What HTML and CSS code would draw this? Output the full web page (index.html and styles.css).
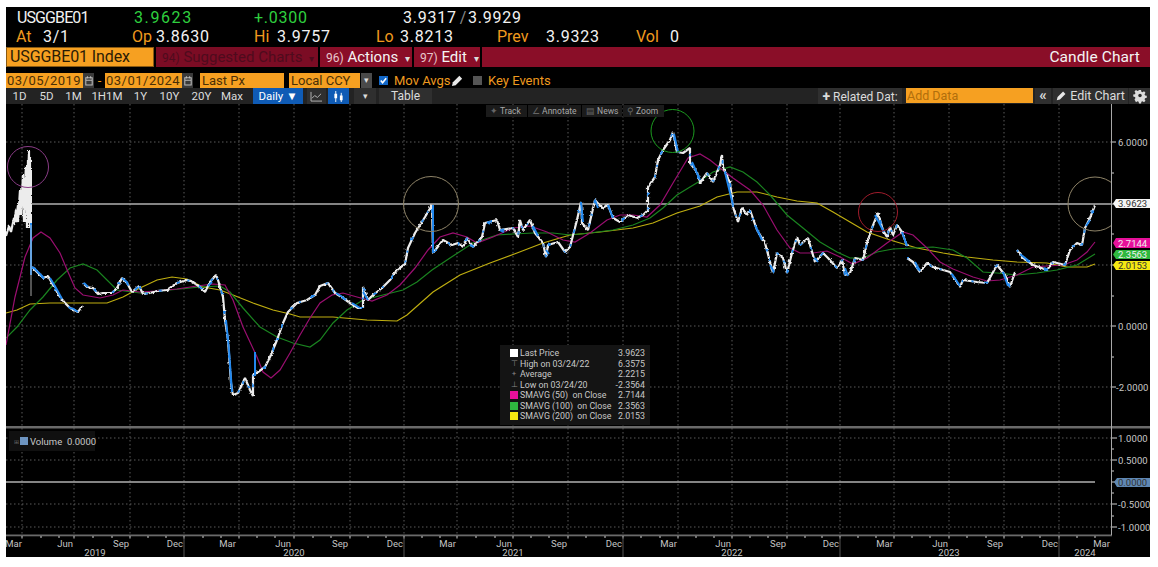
FILE: index.html
```html
<!DOCTYPE html>
<html lang="en">
<head>
<meta charset="utf-8">
<title>USGGBE01 Candle Chart</title>
<link rel="stylesheet" href="styles.css">
</head>
<body>
<main class="terminal">
  <section class="quote">
    <div class="quote-top">
      <span class="white">USGGBE01</span>
      <span class="green widest">3.9623</span>
      <span class="green wide">+.0300</span>
      <span class="white wide">3.9317<i class="slash">/</i>3.9929</span>
    </div>
    <div class="quote-bottom">
      <span class="orange">At</span><span class="white wide">3/1</span>
      <span class="orange">Op</span><span class="white wide">3.8630</span>
      <span class="orange">Hi</span><span class="white wide">3.9757</span>
      <span class="orange">Lo</span><span class="white wide">3.8213</span>
      <span class="orange">Prev</span><span class="white wide">3.9323</span>
      <span class="orange">Vol</span><span class="white">0</span>
    </div>
  </section>

  <nav class="cmdbar">
    <span class="cmd-ticker">USGGBE01 Index</span>
    <span class="cmd cmd-suggest"><small>94)</small> Suggested Charts <b class="caret">▾</b></span>
    <span class="cmd cmd-actions"><small>96)</small> Actions <b class="caret">▾</b></span>
    <span class="cmd cmd-edit"><small>97)</small> Edit <b class="caret">▾</b></span>
    <span class="cmd-title">Candle Chart</span>
  </nav>

  <div class="params">
    <span class="field field-date">03/05/2019</span>
    <span class="cal"><svg viewBox="0 0 10 12" class="cal-icon"><path d="M1 2h8v9H1zM1 5h8M3 0v3M7 0v3" fill="none" stroke="#bbb" stroke-width="1.3"/></svg></span>
    <span class="dash">-</span>
    <span class="field field-date">03/01/2024</span>
    <span class="cal"><svg viewBox="0 0 10 12" class="cal-icon"><path d="M1 2h8v9H1zM1 5h8M3 0v3M7 0v3" fill="none" stroke="#bbb" stroke-width="1.3"/></svg></span>
    <span class="field field-px">Last Px</span>
    <span class="field field-ccy">Local CCY</span>
    <span class="drop">▾</span>
    <span class="check"><svg viewBox="0 0 10 10" class="check-icon"><path d="M2 5l2 2.500 4-5" fill="none" stroke="#fff" stroke-width="1.800"/></svg></span>
    <span class="opt opt-mov">Mov Avgs</span>
    <svg viewBox="0 0 14 14" class="pencil"><path d="M1 13l1-4 7-7 3 3-7 7z" fill="#e8e8e8"/></svg>
    <span class="box"></span>
    <span class="opt">Key Events</span>
  </div>

  <div class="toolbar">
    <span class="tb tb-w27">1D</span>
    <span class="tb tb-w27">5D</span>
    <span class="tb tb-w27">1M</span>
    <span class="tb tb-w40">1H1M</span>
    <span class="tb tb-w27">1Y</span>
    <span class="tb tb-w31">10Y</span>
    <span class="tb tb-w33">20Y</span>
    <span class="tb tb-w28">Max</span>
    <span class="tb tb-daily">Daily ▼</span>
    <span class="tb tb-line"><svg viewBox="0 0 14 12" class="tb-icon"><path d="M1 1v10h12M2 8l3-3 3 2 4-4" fill="none" stroke="#bbb" stroke-width="1"/></svg></span>
    <span class="tb tb-candle"><svg viewBox="0 0 14 12" class="tb-icon"><path d="M4 0v12M10 2v10" stroke="#fff" stroke-width="1"/><path d="M2.500 3h3v5h-3zM8.500 5h3v5h-3z" fill="#fff"/></svg></span>
    <span class="tb tb-more">▾</span>
    <span class="tb tb-table">Table</span>
    <span class="tb-spacer"></span>
    <span class="tb tb-related"><b class="plus">+</b> Related Dat:</span>
    <span class="add-data">Add Data</span>
    <span class="tb tb-back">«</span>
    <span class="tb tb-editc"><svg viewBox="0 0 14 14" class="tb-pencil"><path d="M1 13l1-4 7-7 3 3-7 7z" fill="#e8e8e8"/></svg>Edit Chart</span>
    <span class="tb tb-gear"><svg viewBox="0 0 14 14" class="tb-gear-icon"><path d="M5.800 0h2.400l.4 2 1.300.6 1.800-1.100 1.700 1.700-1.100 1.800.6 1.300 2 .4v2.400l-2 .4-.6 1.300 1.100 1.800-1.700 1.700-1.800-1.100-1.300.6-.4 2H5.800l-.4-2-1.300-.6-1.800 1.100L.6 11.200l1.100-1.800L1.100 8.100-.9 7.700V5.300l2-.4.6-1.300L.6 1.800 2.300.1l1.800 1.100 1.300-.6z" fill="#ddd" fill-rule="evenodd"/><circle cx="7" cy="6.500" r="2" fill="#2a2a2a"/></svg></span>
  </div>

  <section class="chart">
    <svg class="plot" viewBox="6 104 1144 453" width="1144" height="453">
      <defs>
        <clipPath id="paneclip"><rect x="6" y="104" width="1105.500" height="322"/></clipPath>
        <filter id="jitter" x="-2%" y="-10%" width="104%" height="120%">
          <feTurbulence type="fractalNoise" baseFrequency="0.4" numOctaves="1" seed="4"/>
          <feDisplacementMap in="SourceGraphic" scale="3" xChannelSelector="R" yChannelSelector="G"/>
        </filter>
        <g id="spike">
          <polyline points="6,236 9,226 11,232 14,218 16,222 18,205 19,215 21,195 22,205 24,178 25,195 26,170 27,215 28,160 29,205 30,157 30,228 31,170 31,225"/>
          <polyline points="14,225 16,210 18,222 20,190 21,215 23,175 24,222 26,165 27,228 29,150 29,222"/>
        </g>
        <g id="series">
          <polyline points="32,267 37,272 43,278 48,276 53,285 60,297 65,303 70,308 78,312 82,306"/>
          <polyline points="83,283 87,287 93,288 98,294 103,293 112,293 117,288 122,278 127,283 132,292 139,286 143,294 150,293 157,291 167,290 177,283 187,280 193,282 200,287 205,292 210,282 216,275 218,280 223,297 225,320 228,340 231,383 233,395 238,393 245,378 250,390 253,396 253,375 258,372 265,367 270,357 277,340 283,323 288,312 297,303 307,300 315,295 320,286 328,283 335,293 343,298 350,303 358,308 363,308 363,287 368,300 373,295 382,288 390,280 397,270 405,264 408,248 415,233 425,217 432,205 433,253 443,240 452,245 458,243 463,247 467,238 473,247 482,237 485,223 497,220 500,230 513,228 518,237 520,220 523,230 530,220 535,233 543,243 546,257 548,245 558,242 565,252 570,247 577,220 581,202 582,223 588,230 595,200 602,208 608,205 613,218 620,222 628,215 637,218 643,215 648,210 648,187 655,177 658,160 663,150 670,140 673,132 677,152 683,153 690,148 690,163 697,172 700,183 707,173 713,182 720,165 722,155 723,167 730,183 733,207 738,222 742,208 747,215 750,210 757,230 765,243 773,273 777,253 783,258 787,273 792,253 797,237 800,245 808,238 815,262 823,253 828,258 837,268 842,260 845,275 850,273 855,258 863,260 867,243 872,228 878,213 883,230 887,237 890,227 893,235 897,225 902,232 907,246"/>
          <polyline points="907,258 913,262 920,272 927,263 933,267 950,272 960,287 963,280 977,282 987,283 997,265 1005,275 1010,287 1015,272"/>
          <polyline points="1017,250 1022,257 1033,265 1047,270 1053,262 1065,265 1070,250 1077,243 1082,245 1085,228 1090,218 1095,205"/>
        </g>
      </defs>

      <path class="grid" d="M22 104V535M74 104V535M130 104V535M184 104V535M239 104V535M294 104V535M350 104V535M404 104V535M457 104V535M513 104V535M568 104V535M623 104V535M678 104V535M732 104V535M787 104V535M840 104V535M894 104V535M949 104V535M1004 104V535M1059 104V535"/>
      <path class="grid" d="M6 142H1111M6 265H1111M6 326H1111M6 387H1111M6 438H1111M6 460H1111M6 504H1111M6 527H1111"/>

      <line class="level" x1="31" y1="204" x2="1111" y2="204"/>
      <line class="level" x1="6" y1="482" x2="1095" y2="482"/>

      <polyline class="ma ma200" points="6,313 17,310 30,304 50,303 83,303 107,303 123,297 140,288 157,280 172,277 187,279 203,287 220,290 233,295 253,303 273,310 290,314 300,317 333,317 367,320 397,321 407,315 433,292 460,275 490,263 517,253 543,243 570,235 600,232 633,228 653,223 677,213 700,206 717,197 737,192 757,192 777,197 797,201 817,203 833,212 850,222 867,232 890,240 917,248 943,253 967,257 993,260 1017,262 1047,263 1067,267 1087,267 1095,264"/>
      <polyline class="ma ma100" points="6,338 17,327 30,310 43,297 57,280 70,268 83,264 97,270 107,280 117,290 140,293 160,291 180,289 200,287 220,286 230,292 243,308 260,327 277,337 293,343 310,347 320,340 333,323 347,310 363,300 383,295 403,290 417,282 432,270 450,258 473,243 497,235 513,234 533,233 553,233 570,235 590,233 613,230 633,225 650,218 663,208 677,195 690,187 700,181 713,172 730,167 743,172 757,182 770,195 787,215 803,228 820,242 837,252 850,258 863,258 877,252 893,249 913,248 933,247 953,250 967,258 983,272 997,273 1017,275 1037,273 1057,270 1077,265 1095,254"/>
      <polyline class="ma ma50" points="6,345 15,297 25,257 33,238 41,232 50,238 60,253 68,272 75,288 83,295 100,298 113,295 123,290 140,292 157,291 177,289 197,286 213,284 225,285 233,300 243,327 257,357 263,372 271,378 280,370 290,353 300,335 310,318 320,303 332,295 343,293 357,297 372,301 387,295 400,285 415,268 428,250 440,237 453,233 467,237 477,243 493,237 513,228 530,226 547,232 563,240 575,242 590,233 607,220 620,215 633,215 647,217 660,205 673,183 688,158 700,154 710,160 720,168 733,178 750,190 763,205 777,230 790,248 800,253 813,253 827,251 840,257 853,264 867,258 887,243 903,232 913,235 927,248 940,262 953,269 973,277 987,281 1000,280 1017,275 1033,267 1047,266 1063,265 1077,260 1087,252 1095,242"/>

      <use class="candles" href="#spike" filter="url(#jitter)"/>
      <use class="candles" href="#series" filter="url(#jitter)"/>
      <use class="candles-blue" href="#series" filter="url(#jitter)"/>
      <g class="falls">
        <path d="M31 223V275M433 205V253M226 320L229 350L232 392M255 352V376"/>
        <path d="M33 267L38 272L44 278M50 278L56 288L62 299M72 308L78 312M84 283L88 287M122 278L128 283M135 290L138 287M208 286L212 282"/>
        <path d="M336 293L344 298M352 303L360 308M363 292L368 300M470 245L474 247M487 222L490 224M500 230L504 232M533 226L538 236M546 250L549 254M581 202L583 222M595 200L598 208M608 205L613 218M674 134L678 152M692 162L700 180M725 172L733 205M755 225L762 240M770 265L774 272M815 258L818 262M845 268L848 276M875 215L884 232M902 232L907 246"/>
        <path d="M915 262L920 271M952 274L960 286M1003 272L1008 286M1020 254L1030 262M1044 268L1048 270M1086 226L1090 220"/>
      </g>
      <line class="wick" x1="31" y1="225" x2="31" y2="296"/>

      <g clip-path="url(#paneclip)">
        <circle class="ring ring-pink" cx="28" cy="167" r="20.500"/>
        <circle class="ring ring-tan" cx="431" cy="204" r="27.500"/>
        <circle class="ring ring-green" cx="672.500" cy="131" r="21.500"/>
        <circle class="ring ring-red" cx="878" cy="212" r="19.500"/>
        <circle class="ring ring-tan" cx="1095" cy="204" r="27"/>
      </g>

      <rect class="divider" x="6" y="426" width="1144" height="2.500"/>
      <rect class="divider" x="6" y="534.500" width="1106" height="1.800"/>
      <line class="axis" x1="1111.500" y1="104" x2="1111.500" y2="535"/>
      <path class="ticks" d="M1112 142h4M1112 173h2M1112 204h4M1112 234h2M1112 265h4M1112 296h2M1112 326h4M1112 357h2M1112 387h4M1112 438h5M1112 449h2M1112 460h5M1112 471h2M1112 482h4M1112 493h2M1112 504h5M1112 516h2M1112 527h5"/>
      <path class="ticks" d="M22 536v2.500M41 536v2M59 536v2M74 536v2.500M93 536v2M112 536v2M130 536v2.500M148 536v2M166 536v2M184 536v2.500M203 536v2M221 536v2M239 536v2.500M257 536v2M275 536v2M294 536v2.500M313 536v2M331 536v2M350 536v2.500M368 536v2M386 536v2M404 536v2.500M422 536v2M440 536v2M457 536v2.500M476 536v2M495 536v2M513 536v2.500M531 536v2M549 536v2M568 536v2.500M586 536v2M605 536v2M623 536v2.500M641 536v2M660 536v2M678 536v2.500M696 536v2M714 536v2M732 536v2.500M750 536v2M768 536v2M787 536v2.500M805 536v2M822 536v2M840 536v2.500M858 536v2M876 536v2M894 536v2.500M912 536v2M930 536v2M949 536v2.500M967 536v2M986 536v2M1004 536v2.500M1022 536v2M1040 536v2M1059 536v2.500M1077 536v2M1095 536v2"/>
      <path class="yearline" d="M184 537V557M404 537V557M623 537V557M840 537V557M1059 537V557"/>

      <g class="axis-label">
        <text x="1118" y="145.500">6.0000</text>
        <text x="1118" y="329.500">0.0000</text>
        <text x="1116" y="390.500">-2.0000</text>
        <text x="1118" y="441.500">1.0000</text>
        <text x="1118" y="463.500">0.5000</text>
        <text x="1118" y="507.500">-0.5000</text>
        <text x="1118" y="530.500">-1.0000</text>
      </g>

      <polygon class="tag-white" points="1113,203.500 1116,199 1150,199 1150,208 1116,208"/>
      <polygon class="tag-magenta" points="1113,243 1116,238 1150,238 1150,248 1116,248"/>
      <polygon class="tag-lime" points="1113,254.500 1116,250 1150,250 1150,259 1116,259"/>
      <polygon class="tag-yellow" points="1113,265 1116,261 1150,261 1150,270 1116,270"/>
      <polygon class="tag-steel" points="1114,482 1117,478 1150,478 1150,487 1117,487"/>
      <text class="tag-text tag-dark" x="1118" y="207">3.9623</text>
      <text class="tag-text tag-light" x="1118" y="246.500">2.7144</text>
      <text class="tag-text tag-light" x="1118" y="258">2.3563</text>
      <text class="tag-text tag-dark" x="1118" y="269">2.0153</text>
      <text class="tag-text tag-dark" x="1118" y="486">0.0000</text>

      <g class="month">
        <text x="22" y="547">Mar</text><text x="73" y="547">Jun</text><text x="129" y="547">Sep</text><text x="183" y="547">Dec</text>
        <text x="236" y="547">Mar</text><text x="291" y="547">Jun</text><text x="348" y="547">Sep</text><text x="403" y="547">Dec</text>
        <text x="456" y="547">Mar</text><text x="512" y="547">Jun</text><text x="567" y="547">Sep</text><text x="622" y="547">Dec</text>
        <text x="677" y="547">Mar</text><text x="731" y="547">Jun</text><text x="786" y="547">Sep</text><text x="839" y="547">Dec</text>
        <text x="893" y="547">Mar</text><text x="948" y="547">Jun</text><text x="1003" y="547">Sep</text><text x="1058" y="547">Dec</text>
        <text x="1110" y="547">Mar</text>
      </g>
      <g class="year">
        <text x="95" y="556">2019</text><text x="294" y="556">2020</text><text x="513" y="556">2021</text>
        <text x="732" y="556">2022</text><text x="949" y="556">2023</text><text x="1085" y="556">2024</text>
      </g>
    </svg>

    <div class="mini-tools">
      <span class="mini mini-track"><i class="mini-sign">✦</i> Track</span>
      <span class="mini mini-annot"><i class="mini-sign">∠</i> Annotate</span>
      <span class="mini mini-news"><i class="mini-sign">▤</i> News</span>
      <span class="mini mini-zoom"><i class="mini-sign">⚲</i> Zoom</span>
    </div>

    <div class="legend">
      <i class="sq sq-white"></i><span>Last Price</span><span class="val">3.9623</span>
      <i class="glyph">⊤</i><span>High on 03/24/22</span><span class="val">6.3575</span>
      <i class="glyph">+</i><span>Average</span><span class="val">2.2215</span>
      <i class="glyph">⊥</i><span>Low on 03/24/20</span><span class="val">-2.3564</span>
      <i class="sq sq-magenta"></i><span>SMAVG (50)&nbsp; on Close</span><span class="val">2.7144</span>
      <i class="sq sq-green"></i><span>SMAVG (100)&nbsp; on Close</span><span class="val">2.3563</span>
      <i class="sq sq-yellow"></i><span>SMAVG (200)&nbsp; on Close</span><span class="val">2.0153</span>
    </div>

    <div class="vol-legend"><i class="vol-plus">⊞</i><i class="sq sq-steel"></i><span class="vol-text">Volume&nbsp; 0.0000</span></div>
  </section>
</main>
</body>
</html>
```
FILE: styles.css
```css
* { box-sizing: border-box; }
html, body { height: 100%; overflow: hidden; }
body { margin: 0; background: #fff; padding: 7px 8px 0 6px; font-family: Roboto, "Liberation Sans", sans-serif; }
i { font-style: normal; }

.terminal { width: 1144px; height: 550px; background: #000; display: flex; flex-direction: column; }

.quote { height: 40px; font-size: 16px; line-height: 19px; padding-top: 1px; flex: none; }
.quote-top { display: grid; grid-template-columns: 117px 120px 149px auto; padding-left: 11px; letter-spacing: -.9px; }
.quote-bottom { display: grid; grid-template-columns: 27px 89px 24px 98px 23px 99px 24px 97px 49px 90px 34px auto; padding-left: 10px; }
.white { color: #f2f2f2; }
.green { color: #2fd03f; }
.orange { color: #f09a1e; }
.wide { letter-spacing: .75px; }
.widest { letter-spacing: 1.600px; }
.slash { color: #888; margin: 0 1px 0 3px; }

.cmdbar { height: 20px; flex: none; display: flex; background: #8a0e28; font-size: 15px; line-height: 20px; color: #f4f4f4; }
.cmd-ticker { width: 148px; background: #f6a021; color: #2b1c05; padding-left: 3px; font-size: 16px; letter-spacing: -.1px; border: 1px solid #8a5a12; line-height: 18px; }
.cmd { border-left: 2px solid #000; padding-left: 6px; white-space: nowrap; }
.cmd small { font-size: 12px; color: #e8c6cc; }
.caret { font-size: 10px; font-weight: 400; margin-left: 3px; color: #ddd; }
.cmd-suggest { width: 164px; color: #4e0b1d; background: #7b0c24; }
.cmd-suggest small { color: #4e0b1d; }
.cmd-suggest .caret { color: #4e0b1d; }
.cmd-actions { width: 94px; }
.cmd-edit { width: 70px; border-right: 2px solid #000; }
.cmd-title { margin-left: auto; padding-right: 10px; font-size: 15.500px; letter-spacing: .1px; }

.params { height: 21px; flex: none; padding-top: 6px; display: flex; align-items: flex-start; font-size: 13px; line-height: 15px; }
.field { height: 15px; background: #f6a021; color: #4a2f06; padding-left: 2px; white-space: nowrap; }
.field-date { width: 77px; letter-spacing: .5px; padding-left: 1px; }
.field-px { width: 84px; margin-left: 7px; }
.field-ccy { width: 71px; margin-left: 5px; }
.cal { width: 11px; height: 15px; background: #3a3a3a; display: flex; align-items: center; justify-content: center; }
.cal-icon { width: 8px; height: 10px; }
.dash { width: 11px; color: #f09a1e; text-align: center; }
.drop { width: 11px; height: 15px; margin-left: 1px; background: #4a4a4a; color: #ddd; font-size: 9px; text-align: center; }
.check { width: 9px; height: 9px; margin: 3px 6px 0 7px; background: #1267c8; display: flex; }
.check-icon { width: 9px; height: 9px; }
.opt { color: #ef9a1f; white-space: nowrap; }
.opt-mov { width: 57px; }
.pencil { width: 13px; height: 13px; margin-top: 1px; }
.box { width: 9px; height: 9px; margin: 3px 6px 0 9px; background: #555; }

.toolbar { height: 16px; flex: none; display: flex; background: #232323; font-size: 11.500px; line-height: 16px; color: #dcdcdc; }
.tb { display: block; text-align: center; white-space: nowrap; }
.tb-w27 { width: 27px; }
.tb-w31 { width: 31px; }
.tb-w33 { width: 33px; }
.tb-w28 { width: 28px; }
.tb-w40 { width: 40px; }
.tb-daily { width: 50px; margin-left: 7px; background: #0f5bb5; color: #fff; }
.tb-line { width: 19px; margin-left: 4px; background: #2f2f2f; }
.tb-candle { width: 21px; margin-left: 2px; background: #0f5bb5; }
.tb-icon { width: 13px; height: 11px; margin-top: 3px; display: block; margin-left: auto; margin-right: auto; }
.tb-more { width: 22px; margin-left: 5px; background: #2f2f2f; font-size: 9px; }
.tb-table { width: 53px; margin-left: 3px; background: #2f2f2f; font-size: 12px; }
.tb-spacer { flex: 1; }
.tb-related { width: 84px; background: #2f2f2f; font-size: 12px; overflow: hidden; }
.plus { font-size: 14px; font-weight: 700; }
.add-data { width: 127px; margin-left: 4px; background: #f6a021; color: #b06e0c; padding-left: 1px; font-size: 12.500px; height: 15px; line-height: 15px; }
.tb-back { width: 16px; margin-left: 2px; background: #2f2f2f; font-size: 15px; line-height: 14px; font-weight: 700; }
.tb-editc { width: 75px; margin-left: 2px; background: #2f2f2f; font-size: 12.500px; }
.tb-pencil { width: 11px; height: 11px; margin-right: 3px; vertical-align: -1px; }
.tb-gear { width: 21px; margin-left: 1px; background: #2f2f2f; }
.tb-gear-icon { width: 12px; height: 12px; margin-top: 2px; overflow: visible; }

.chart { position: relative; flex: 1; overflow: hidden; }
.plot { display: block; font-family: Roboto, "Liberation Sans", sans-serif; }
.grid { fill: none; stroke: #5a5a5a; stroke-width: 1; stroke-dasharray: 1.500 2.500; }
.level { stroke: #b0b0b0; stroke-width: 1.500; }
.ma { fill: none; stroke-width: 1.200; }
.ma50 { stroke: #9a0e70; }
.ma100 { stroke: #1a8420; }
.ma200 { stroke: #bfae10; }
.candles { fill: none; stroke: #ececec; stroke-width: 2.200; stroke-linejoin: bevel; }
.candles-blue { fill: none; stroke: #2288ee; stroke-width: 1.800; stroke-linejoin: bevel; stroke-dasharray: 2 11 4 17 3 8; }
.falls path { fill: none; stroke: #2288ee; stroke-width: 2; }
.wick { stroke: #cfcfcf; stroke-width: .8; }
.ring { fill: none; stroke-width: 1; }
.ring-pink { stroke: #8a3c86; }
.ring-tan { stroke: #8f8468; }
.ring-green { stroke: #1b9a1f; }
.ring-red { stroke: #a01c2c; }
.divider { fill: #6a6a6a; }
.axis { stroke: #a8a8a8; stroke-width: 1; }
.ticks { stroke: #cfcfcf; stroke-width: 1; fill: none; }
.yearline { stroke: #555; stroke-width: 1; }
.axis-label { fill: #c9c9c9; font-size: 9.500px; letter-spacing: .1px; }
.tag-white { fill: #f5f5f5; }
.tag-magenta { fill: #e6109a; }
.tag-lime { fill: #2fb83f; }
.tag-yellow { fill: #f5e812; }
.tag-steel { fill: #5f88b4; }
.tag-text { font-size: 9.500px; }
.tag-dark { fill: #333; }
.tag-light { fill: #f0f0f0; }
.month text { fill: #c4c4c4; font-size: 9.500px; text-anchor: end; }
.year text { fill: #c4c4c4; font-size: 9.500px; text-anchor: middle; }

.mini-tools { position: absolute; left: 480px; top: 1px; display: flex; gap: 1px; height: 12px; font-size: 8.500px; line-height: 12px; color: #a8a8a8; }
.mini { background: #1b1b1b; padding-left: 4px; white-space: nowrap; }
.mini-sign { color: #666; }
.mini-track { width: 41px; }
.mini-annot { width: 53px; }
.mini-news { width: 40px; }
.mini-zoom { width: 41px; }

.legend { position: absolute; left: 494px; top: 241px; width: 150px; height: 80px; padding: 3px 5px 0 10px; background: #141414; display: grid; grid-template-columns: 8px 1fr auto; grid-auto-rows: 10.500px; column-gap: 2px; font-size: 8.800px; line-height: 10.500px; color: #c8c8c8; align-items: center; white-space: nowrap; }
.val { text-align: right; }
.sq { display: block; flex: none; width: 8px; height: 8px; }
.glyph { color: #888; text-align: center; font-size: 8px; }
.sq-white { background: #fff; }
.sq-magenta { background: #e6109a; }
.sq-green { background: #2fb83f; }
.sq-yellow { background: #f5e812; }
.sq-steel { background: #6d94c0; margin-right: 2px; }

.vol-legend { position: absolute; left: 3px; top: 327px; width: 86px; height: 20px; padding-left: 5px; background: #101010; display: flex; align-items: center; font-size: 9.500px; color: #c8c8c8; white-space: nowrap; }
.vol-plus { flex: none; width: 6px; color: #666; font-size: 6px; }
```
